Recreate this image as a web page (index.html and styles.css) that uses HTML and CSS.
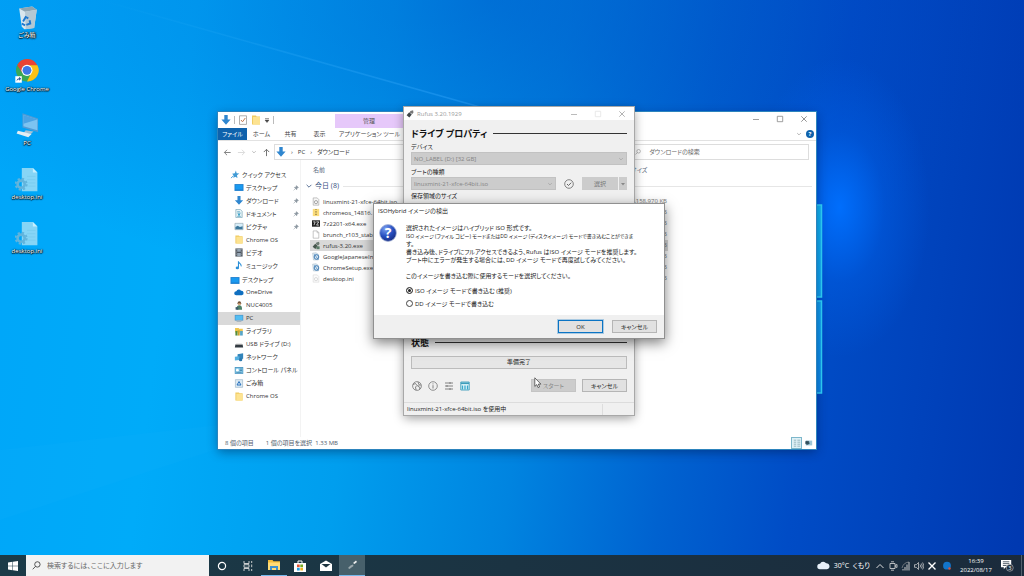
FILE: index.html
```html
<!DOCTYPE html>
<html lang="ja">
<head>
<meta charset="utf-8">
<meta name="viewport" content="width=device-width, initial-scale=1">
<title>デスクトップ</title>
<link rel="stylesheet" href="styles.css">
</head>
<body>
<svg class="defs" aria-hidden="true">
  <symbol id="down" viewBox="0 0 10 10"><path d="M3.3 0h3.4v4.6H9.6L5 9.8.4 4.6h2.9z" fill="#2f86cf"/></symbol>
  <symbol id="screen" viewBox="0 0 10 10"><path d="M0 1.2h10v7.6H0z" fill="#1c7fd0"/><path d="M1 2.2h8v5H1z" fill="#199af0"/></symbol>
  <symbol id="folder" viewBox="0 0 10 10"><path d="M1 .5h4l.6 1H9v8H1z" fill="#f0cb62"/><path d="M2 2h7v7.5H2z" fill="#fde391"/></symbol>
  <symbol id="pin" viewBox="0 0 8 8"><path d="M4.6.8 7.2 3.4 6.3 3.7 5.2 4.9 4.9 6.4 1.8 3.2 3.3 2.9 4.4 1.8zM3 5 .8 7.2" fill="#8b96a0" stroke="#8b96a0" stroke-width=".7"/></symbol>
  <symbol id="page" viewBox="0 0 10 10"><path d="M1.5.5h5L8.5 2.6v7h-7z" fill="#fff" stroke="#9a9a9a" stroke-width=".7"/><path d="M6.3.6v2.2h2.1" fill="none" stroke="#9a9a9a" stroke-width=".6"/></symbol>
  <symbol id="doc" viewBox="0 0 10 10"><path d="M1.5.5h5L8.5 2.6v7h-7z" fill="#e8f5f8" stroke="#6e9db0" stroke-width=".7"/><path d="M3 3h3M3 4.6h4M3 8.2h4" stroke="#3b8fb5" stroke-width=".7"/><circle cx="5" cy="6.3" r="1.2" fill="#3ba2c9"/></symbol>
  <symbol id="disc" viewBox="0 0 10 10"><path d="M1.5.5h5L8.5 2.6v7h-7z" fill="#f7f7f7" stroke="#999" stroke-width=".7"/><circle cx="5" cy="5.8" r="2" fill="none" stroke="#888" stroke-width=".9"/></symbol>
  <symbol id="picture" viewBox="0 0 10 10"><path d="M.5 1.5h9v7h-9z" fill="#d7eefa" stroke="#93a5b0" stroke-width=".7"/><path d="M1 8V5.6l2.6-1.4L6 5.6l3-1V8z" fill="#3c789c"/></symbol>
  <symbol id="film" viewBox="0 0 10 10"><path d="M1 .5h8v9H1z" fill="#4a525c"/><path d="M3 1.2h4v3H3zM3 5.6h4v3.2H3z" fill="#97a7b6"/><path d="M1.9 1v8M8.1 1v8" stroke="#ddd" stroke-width=".7" stroke-dasharray="1"/></symbol>
  <symbol id="note" viewBox="0 0 10 10"><path d="M4.4.4v6.8M4.4.8C5.3 3 8 3 7.4 6" fill="none" stroke="#2b8fd8" stroke-width="1.2"/><ellipse cx="3.2" cy="7.7" rx="1.9" ry="1.6" fill="#2b8fd8"/></symbol>
  <symbol id="cloud" viewBox="0 0 12 10"><path d="M2.7 8.4a2.5 2.5 0 0 1 .1-5A3.2 3.2 0 0 1 8.4 3a2.7 2.7 0 0 1 .8 5.4z"/></symbol>
  <symbol id="user" viewBox="0 0 10 10"><circle cx="5.4" cy="2.4" r="2" fill="#6e4f35"/><path d="M4 2.6h2.8v1.8H4z" fill="#e2b184"/><path d="M2.2 9.6C2 6 3.5 4.6 5.4 4.6S8.6 6 8.4 9.6z" fill="#4c8067"/><path d="M1.2 6.8h3v2.8h-3z" fill="#3c5a6d"/></symbol>
  <symbol id="pc" viewBox="0 0 10 10"><path d="M.3 1h9.4v6.3H.3z" fill="#4d93c5"/><path d="M1 1.7h8v4.9H1z" fill="#53bdf2"/><path d="M3 7.3h4l1 1.6H2z" fill="#a9b8c2"/></symbol>
  <symbol id="library" viewBox="0 0 10 10"><path d="M.6 1h4l.6 1h4v4H.6z" fill="#f0c64e"/><path d="M1 4.5h2.4v5H1z" fill="#528e3d"/><path d="M3.6 3.8h2.2v5.7H3.6z" fill="#caa430"/><path d="M6.2 4.5h3v5h-3z" fill="#56a5c9"/></symbol>
  <symbol id="usb" viewBox="0 0 10 10"><path d="M1 5h8l.6 3.2H.4z" fill="#333b42"/><path d="M1 5l1-.9h6l1 .9z" fill="#aaa"/></symbol>
  <symbol id="network" viewBox="0 0 10 10"><path d="M3.4 1.4 9.6.4v6.1l-6.2.9z" fill="#3284ba"/><path d="M.4 4.2l5-.5v4.1l-5 .6z" fill="#54afe0"/><circle cx="6.8" cy="7.4" r="1.9" fill="#2d79ae"/></symbol>
  <symbol id="control" viewBox="0 0 10 10"><path d="M.3 1.2h9.4v7.5H.3z" fill="#3e8cba"/><path d="M1 2h8v6H1z" fill="#8bcdec"/><circle cx="3.2" cy="4.6" r="1.5" fill="#fff"/><path d="M5.7 3.4h2.7M5.7 5h2.7M2 7h6" stroke="#276a93" stroke-width=".7"/></symbol>
  <symbol id="bin" viewBox="0 0 10 10"><path d="M1 .7h8v8.6H1z" fill="#dceaf3" stroke="#8caabd" stroke-width=".6"/><path d="M5 2.8 7.2 6.7H2.8z" fill="none" stroke="#2770bd" stroke-width="1.1"/></symbol>
  <symbol id="star" viewBox="0 0 10 10"><path d="M6 .6 6.800 3.600 9.800 4 7.200 5.800 7.800 9 5.200 7.400 3.200 8.800 3.600 6 1.800 4.200 4.800 3.600z" fill="#3f9ad5"/><path d="M3.500 6.200 .5 9" stroke="#3f9ad5"/></symbol>
  <symbol id="rufus" viewBox="0 0 10 10"><path d="M5.5 1.3 8.8.2 9.4 3.2 7.8 5 4.7 3z" fill="#777"/><path d="M4 2.9 7.2 5.6 4.2 9.4 .8 6.6z" fill="#3f4548"/></symbol>
  <symbol id="rufusfile" viewBox="0 0 10 10"><path d="M5.500 1.300 8.800.2 9.400 3.200 7.800 5 4.700 3z" fill="#6d7a72"/><path d="M4 2.900 7.200 5.600 4.200 9.400 .8 6.600z" fill="#47564d"/><path d="M5.500 6h4v3.600h-4z" fill="#5b7c68"/></symbol>
  <symbol id="installer" viewBox="0 0 10 10"><path d="M.8.8 5 .3l3 2v7H1.800z" fill="#dbe9f2" stroke="#8da5b7" stroke-width=".5"/><circle cx="5.6" cy="5.6" r="2.9" fill="none" stroke="#3977b3" stroke-width="1.2"/><path d="M3 2.2 7.8 9" stroke="#3977b3" stroke-width=".8"/></symbol>
  <symbol id="ini" viewBox="0 0 36 40"><path d="M10 3h17l7 7v29H10z" fill="#86d5f6"/><path d="M27 3v7h7z" fill="#c6f0ff"/><path d="M18 16h13M18 21h13M20 26h11M20 31h11" stroke="#76cbed"/><circle cx="9" cy="28" r="5.500" fill="none" stroke="#62b4dc" stroke-width="4"/><circle cx="9" cy="28" r="8.500" fill="none" stroke="#62b4dc" stroke-width="3" stroke-dasharray="3.400 3.300"/></symbol>
  <symbol id="min" viewBox="0 0 10 10"><path d="M2 5.500h6" stroke="currentColor" stroke-width=".8"/></symbol>
  <symbol id="max" viewBox="0 0 10 10"><path d="M2.300 2.300h5.400v5.400H2.300z" fill="none" stroke="currentColor" stroke-width=".8"/></symbol>
  <symbol id="close" viewBox="0 0 10 10"><path d="M2.300 2.300l5.400 5.400M7.700 2.300 2.300 7.700" stroke="currentColor" stroke-width=".9"/></symbol>
  <symbol id="chev" viewBox="0 0 10 10"><path d="M2 3.500 5 6.500 8 3.500" fill="none" stroke="currentColor" stroke-width="1"/></symbol>
  <symbol id="lens" viewBox="0 0 10 10"><circle cx="6" cy="3.8" r="3" fill="none" stroke="currentColor" stroke-width=".9"/><path d="M3.9 6 .8 9.2" stroke="currentColor" stroke-width=".9"/></symbol>
</svg>

<div class="desktop">
  <svg class="wallpaper" viewBox="0 0 1024 576" preserveAspectRatio="none" aria-hidden="true">
    <defs>
      <linearGradient id="beam" x1="0" y1="0" x2="1" y2="0"><stop offset="0" stop-color="#4cc4ff" stop-opacity="0"/><stop offset="1" stop-color="#38a8ff" stop-opacity=".4"/></linearGradient>
      <linearGradient id="pane" x1="0" y1="0" x2="0" y2="1"><stop offset="0" stop-color="#12b5f2"/><stop offset="1" stop-color="#0d86e8"/></linearGradient>
    </defs>
    <path d="M100 0 480 107" stroke="url(#beam)" stroke-width="1.500" fill="none"/>
    <path d="M0 450 218 425V449L0 520z" fill="#34baff" opacity=".06"/>
    <path d="M700 205h121.500v92H700zM700 301h121.500v92H700z" fill="url(#pane)" stroke="#2fd2fa" stroke-width="1.500"/>
  </svg>

  <main class="workspace">
    <nav class="shortcuts" aria-label="デスクトップ">
      <a class="shortcut" href="#bin-folder"><svg viewBox="0 0 36 40"><path d="M6 7 26 4l7 5-4 28-15 2-4-4z" fill="#d8e7ee"/><path d="M6 7 26 4l7 5-18 3z" fill="#8da5b2"/><path d="M15 12 33 9l-4 28-13 2z" fill="#b4c8d3"/><path d="M12 27l4-7 4 2M22 25l1 5-6 2M15 33l-5-3" fill="none" stroke="#1e78ce" stroke-width="3"/></svg><span>ごみ箱</span></a>
      <a class="shortcut" href="#chrome"><svg viewBox="0 0 36 40"><circle cx="18" cy="19" r="17" fill="#3aa757"/><path d="M3 11A17 17 0 0 1 34 12L18 12z" fill="#ea4335"/><path d="M34 11A17 17 0 0 1 18 36L26 20 19 11z" fill="#fbc116"/><path d="M3 11 11 23 11 14 18 11z" fill="#ea4335"/><circle cx="18" cy="19" r="8.500" fill="#fff"/><circle cx="18" cy="19" r="6.800" fill="#3d78e8"/><path d="M0 28h10v10H0z" fill="#fff"/><path d="M2 36c0-4 2-5 4-5v-2l3 3-3 3v-2c-2 0-3 1-4 3z" fill="#26549a"/></svg><span>Google Chrome</span></a>
      <a class="shortcut" href="#pc"><svg viewBox="0 0 36 40"><path d="M11 2 35 10V31L11 24z" fill="#4f9bd5"/><path d="M12.500 4.500 34 11.500V28L12.500 22z" fill="#7cc3f1"/><path d="M12.500 4.500 34 11.500 12.500 18z" fill="#4ba3e4"/><path d="M16 28 28 30 24 34 13 32z" fill="#a5c1d4"/><path d="M4 29 25 34 20 39 2 33z" fill="#e3edf3"/></svg><span>PC</span></a>
      <a class="shortcut" href="#ini1"><svg><use href="#ini"/></svg><span>desktop.ini</span></a>
      <a class="shortcut" href="#ini2"><svg><use href="#ini"/></svg><span>desktop.ini</span></a>
    </nav>

    <section class="window explorer" aria-label="ダウンロード">
      <header class="ribbon">
        <div class="quickbar">
          <svg class="ic10"><use href="#down"/></svg><i class="bar"></i>
          <svg class="ic10" viewBox="0 0 10 10"><path d="M1.500.8h7v8.600h-7z" fill="#fff" stroke="#8e8e8e" stroke-width=".7"/><path d="M3 5l1.500 1.800L7.300 3" fill="none" stroke="#c47c55"/></svg>
          <svg class="ic10"><use href="#folder"/></svg>
          <svg class="ic6" viewBox="0 0 6 6"><path d="M1 1.500h4M1 3h4L3 5.500z" fill="#444" stroke="#444" stroke-width=".5"/></svg><i class="bar"></i>
        </div>
        <div class="tool-title">管理</div>
        <div class="caption">
          <button aria-label="最小化"><svg><use href="#min"/></svg></button>
          <button aria-label="最大化"><svg><use href="#max"/></svg></button>
          <button aria-label="閉じる"><svg><use href="#close"/></svg></button>
        </div>
      </header>
      <div class="tabs">
        <button class="tab file">ファイル</button><button class="tab">ホーム</button><button class="tab">共有</button><button class="tab">表示</button><button class="tab tools">アプリケーション ツール</button>
        <span class="tabs-end"><svg class="ic6"><use href="#chev"/></svg><span class="help">?</span></span>
      </div>
      <div class="address">
        <div class="arrows">
          <svg viewBox="0 0 10 10"><path d="M8.500 5H1.500M4.500 2l-3 3 3 3" fill="none" stroke="#777"/></svg>
          <svg viewBox="0 0 10 10"><path d="M1 5h7.500M5.500 2l3 3-3 3" fill="none" stroke="#d8d8d8"/></svg>
          <svg class="small"><use href="#chev"/></svg>
          <svg viewBox="0 0 10 10"><path d="M5 9V1.500M2 4.500 5 1.500l3 3" fill="none" stroke="#666"/></svg>
        </div>
        <div class="path"><svg class="ic10"><use href="#down"/></svg><i>›</i><a href="#pc">PC</a><i>›</i><a href="#downloads">ダウンロード</a></div>
        <label class="find"><svg class="ic6"><use href="#lens"/></svg><input type="text" placeholder="ダウンロードの検索" aria-label="ダウンロードの検索"></label>
      </div>
      <div class="panes">
        <nav class="tree" aria-label="フォルダー">
          <a class="top" href="#q"><svg><use href="#star"/></svg>クイック アクセス</a>
          <a href="#t1"><svg><use href="#screen"/></svg>デスクトップ<svg class="pin"><use href="#pin"/></svg></a>
          <a href="#t2"><svg><use href="#down"/></svg>ダウンロード<svg class="pin"><use href="#pin"/></svg></a>
          <a href="#t3"><svg><use href="#doc"/></svg>ドキュメント<svg class="pin"><use href="#pin"/></svg></a>
          <a href="#t4"><svg><use href="#picture"/></svg>ピクチャ<svg class="pin"><use href="#pin"/></svg></a>
          <a href="#t5"><svg><use href="#folder"/></svg>Chrome OS</a>
          <a href="#t6"><svg><use href="#film"/></svg>ビデオ</a>
          <a href="#t7"><svg><use href="#note"/></svg>ミュージック</a>
          <a class="top second" href="#t8"><svg><use href="#screen"/></svg>デスクトップ</a>
          <a href="#t9"><svg fill="#0f6fc0"><use href="#cloud"/></svg>OneDrive</a>
          <a href="#t10"><svg><use href="#user"/></svg>NUC4005</a>
          <a class="current" href="#t11"><svg><use href="#pc"/></svg>PC</a>
          <a href="#t12"><svg><use href="#library"/></svg>ライブラリ</a>
          <a href="#t13"><svg><use href="#usb"/></svg>USB ドライブ (D:)</a>
          <a href="#t14"><svg><use href="#network"/></svg>ネットワーク</a>
          <a href="#t15"><svg><use href="#control"/></svg>コントロール パネル</a>
          <a href="#t16"><svg><use href="#bin"/></svg>ごみ箱</a>
          <a href="#t17"><svg><use href="#folder"/></svg>Chrome OS</a>
        </nav>
        <div class="files">
          <table>
            <thead>
              <tr><th class="name">名前</th><th class="size">サイズ</th></tr>
            </thead>
            <tbody>
              <tr class="group"><td colspan="2"><div><svg class="ic8"><use href="#chev"/></svg>今日 (8)</div></td></tr>
              <tr><td><span><svg><use href="#disc"/></svg>linuxmint-21-xfce-64bit.iso</span></td><td class="kb">2,158,970 KB</td></tr>
              <tr><td><span><svg viewBox="0 0 10 10"><path d="M1 .5h8v9H1z" fill="#fbdc7b"/><path d="M5 1v8" stroke="#7b6b37" stroke-width="1.500" stroke-dasharray="1"/></svg>chromeos_14816.</span></td><td class="kb">KB</td></tr>
              <tr><td><span><svg viewBox="0 0 10 10"><path d="M0 1h10v8H0z" fill="#222"/><path d="M1.500 3h2.500L2.500 7M5.500 3h3L5.700 7h3" fill="none" stroke="#fff" stroke-width=".9"/></svg>7z2201-x64.exe</span></td><td class="kb">KB</td></tr>
              <tr><td><span><svg><use href="#page"/></svg>brunch_r103_stabl</span></td><td class="kb">KB</td></tr>
              <tr class="selected"><td><span><svg><use href="#rufusfile"/></svg>rufus-3.20.exe</span></td><td class="kb">KB</td></tr>
              <tr><td><span><svg><use href="#installer"/></svg>GoogleJapaneseIn</span></td><td class="kb">KB</td></tr>
              <tr><td><span><svg><use href="#installer"/></svg>ChromeSetup.exe</span></td><td class="kb">KB</td></tr>
              <tr><td><span><svg class="faded"><use href="#disc"/></svg>desktop.ini</span></td><td class="kb">KB</td></tr>
            </tbody>
          </table>
        </div>
      </div>
      <footer class="explorer-status">
        <span>8 個の項目</span><span>1 個の項目を選択&nbsp; 1.33 MB</span>
        <div class="views">
          <button class="on" aria-label="詳細"><svg viewBox="0 0 10 10"><path d="M1 1.500h3M5.500 1.500H9M1 4h3M5.500 4H9M1 6.500h3M5.500 6.500H9M1 9h3M5.500 9H9" stroke="#7198a5" stroke-width=".8"/></svg></button>
          <button aria-label="大アイコン"><svg viewBox="0 0 10 10"><path d="M1 2h8v6H1z" fill="#9cc6d8"/><path d="M1 3h3.500v3H1zM2 7l4-2" fill="#314b58" stroke="#314b58"/></svg></button>
        </div>
      </footer>
    </section>

    <section class="window rufus" aria-label="Rufus">
      <header class="rufus-title"><svg class="ic8"><use href="#rufus"/></svg><span>Rufus 3.20.1929</span>
        <div class="caption">
          <button aria-label="最小化"><svg><use href="#min"/></svg></button>
          <button aria-label="最大化" disabled><svg><use href="#max"/></svg></button>
          <button aria-label="閉じる"><svg><use href="#close"/></svg></button>
        </div>
      </header>
      <div class="rufus-body">
        <h2>ドライブ プロパティ</h2>
        <label for="device">デバイス</label>
        <div class="pick"><select id="device" disabled><option>NO_LABEL (D:) [32 GB]</option></select><svg class="ic6"><use href="#chev"/></svg></div>
        <label for="boot">ブートの種類</label>
        <div class="boot-row">
          <div class="pick"><select id="boot" disabled><option>linuxmint-21-xfce-64bit.iso</option></select><svg class="ic6"><use href="#chev"/></svg></div>
          <svg class="ic10" viewBox="0 0 10 10"><circle cx="5" cy="5" r="4.300" fill="none" stroke="#666" stroke-width=".8"/><path d="M3 5l1.500 1.500L7.200 3.700" fill="none" stroke="#555" stroke-width=".9"/></svg>
          <div class="split"><button disabled>選択</button><button disabled aria-label="その他"><svg viewBox="0 0 6 6"><path d="M1 2h4L3 4.500z" fill="#888"/></svg></button></div>
        </div>
        <label>保存領域のサイズ</label>
        <h2 class="state">状態</h2>
        <div class="ready" role="status">準備完了</div>
        <div class="actions">
          <button class="tool" aria-label="言語"><svg viewBox="0 0 10 10"><circle cx="5" cy="5" r="4.400" fill="none" stroke="#777" stroke-width=".8"/><path d="M1 3.500 3.500 2.500 5 4.500 3.500 6 4 9M6 1l1 2.500L5.500 5 8 6.500 7.500 8.500M9 4H7" fill="none" stroke="#777" stroke-width=".9"/></svg></button>
          <button class="tool" aria-label="情報"><svg viewBox="0 0 10 10"><circle cx="5" cy="5" r="4.300" fill="none" stroke="#777" stroke-width=".8"/><path d="M5 4.200v3.300M5 2.400v1" stroke="#777" stroke-width=".9"/></svg></button>
          <button class="tool" aria-label="設定"><svg viewBox="0 0 10 10"><path d="M1 2h8M1 5h8M1 8h8M6 1v2M3 4v2M6 7v2" stroke="#777" stroke-width=".9"/></svg></button>
          <button class="tool" aria-label="ログ"><svg viewBox="0 0 10 10"><path d="M.8 1h8.400v8H.8z" fill="#dff4fa" stroke="#3c9cba" stroke-width=".9"/><path d="M1 2.300h8" stroke="#3c9cba" stroke-width="1.600"/><path d="M2.500 4.500v4M5 4.500v4M7.500 4.500v4" stroke="#39a8cb" stroke-width="1.300"/></svg></button>
          <button class="btn start" disabled>スタート</button>
          <button class="btn">キャンセル</button>
        </div>
      </div>
      <footer class="rufus-status"><span>linuxmint-21-xfce-64bit.iso を使用中</span><i></i></footer>
    </section>

    <section class="window dialog" role="dialog" aria-label="ISOHybrid イメージの検出">
      <header>ISOHybrid イメージの検出</header>
      <div class="dialog-body">
        <svg class="question" viewBox="0 0 18 18" role="img" aria-label="確認"><defs><radialGradient id="ball" cx=".35" cy=".25" r=".9"><stop offset="0" stop-color="#7a9ff0"/><stop offset=".5" stop-color="#274fc0"/><stop offset="1" stop-color="#12216e"/></radialGradient></defs><circle cx="9" cy="9" r="8.400" fill="url(#ball)" stroke="#a9b8d8" stroke-width=".8"/><text class="mark" x="9" y="14" text-anchor="middle">?</text></svg>
        <div class="message">
          <p>選択されたイメージはハイブリッド ISO 形式です。<br><span class="fine">ISO イメージ (ファイル コピー) モードまたはDD イメージ (ディスクイメージ) モードで書き込むことができま</span><br>す。<br>書き込み後、ドライブにフルアクセスできるよう、Rufus はISO イメージ モードを推奨します。<br>ブート中にエラーが発生する場合には、DD イメージ モードで再度試してみてください。</p>
          <p>このイメージを書き込む際に使用するモードを選択してください。</p>
          <label><input type="radio" name="mode" checked>ISO イメージ モードで書き込む (推奨)</label>
          <label><input type="radio" name="mode">DD イメージ モードで書き込む</label>
        </div>
      </div>
      <footer><button class="btn ok">OK</button><button class="btn">キャンセル</button></footer>
    </section>

    <svg class="cursor" viewBox="0 0 8 12" aria-hidden="true"><path d="M.8.8v8.600l2-1.800 1.300 3 1.500-.7-1.300-2.800h2.600z" fill="#fff" stroke="#333" stroke-width=".7"/></svg>
  </main>

  <footer class="taskbar">
    <button class="start-menu" aria-label="スタート"><svg class="ic10" viewBox="0 0 10 10"><path d="M0 1.400 4.500.8v3.900H0zM5 .7 10 0v4.700H5zM0 5.200h4.500v4L0 8.600zM5 5.200h5V10l-5-.7z" fill="#fff"/></svg></button>
    <label class="search"><svg><use href="#lens"/></svg><input type="text" placeholder="検索するには、ここに入力します" aria-label="検索"></label>
    <div class="apps">
      <button aria-label="Cortana"><svg viewBox="0 0 10 10"><circle cx="5" cy="5" r="3.600" fill="none" stroke="#fff" stroke-width="1.200"/></svg></button>
      <button aria-label="タスク ビュー"><svg viewBox="0 0 10 10"><path d="M1 0v2.500h5V0M1 10V7.500h5V10M1 3.700h5v2.600H1zM8.700 0v2M8.700 3.500v2.700M8.700 8v2" fill="none" stroke="#ddd" stroke-width=".9"/></svg></button>
      <button class="open" aria-label="エクスプローラー"><svg class="big" viewBox="0 0 12 12"><path d="M0 1h4.500l1 1.300H12V11H0z" fill="#f3bd3b"/><path d="M0 3.500h12V11H0z" fill="#ffdc75"/><path d="M2 7h8v4H8V9H4v2H2z" fill="#3e91cd"/></svg></button>
      <button aria-label="Microsoft Store"><svg class="big" viewBox="0 0 12 12"><path d="M4 3V1h4v2" fill="none" stroke="#fff"/><path d="M0 3h12v9H0z" fill="#fff"/><path d="M3 4.500h2.700v2.700H3z" fill="#e65332"/><path d="M6.300 4.500H9v2.700H6.300z" fill="#76ac25"/><path d="M3 7.800h2.700v2.700H3z" fill="#249fe0"/><path d="M6.300 7.800H9v2.700H6.300z" fill="#f2b423"/></svg></button>
      <button aria-label="メール"><svg class="big" viewBox="0 0 12 12"><path d="M0 4 6 .5 12 4v7H0z" fill="#fff"/><path d="M1.500 4h9L6 7.500z" fill="#1d3440"/></svg></button>
      <button class="active" aria-label="Rufus"><svg viewBox="0 0 10 10"><path d="M6 3 9 .5 10 2 7.500 4z" fill="#eee"/><path d="M3.500 5.500 6 4.500l.5 1.500L2.500 9 1 8z" fill="#9ca9ae"/></svg></button>
    </div>
    <div class="tray">
      <button class="weather"><svg viewBox="0 0 12 10" fill="#e7f0fa"><use href="#cloud"/></svg>30°C&ensp;くもり</button>
      <svg viewBox="0 0 10 10"><path d="M1.500 7 5 3.500 8.500 7" fill="none" stroke="#ddd"/></svg>
      <svg viewBox="0 0 10 10"><path d="M2 2.500h5v5H2zM7 4.500l2-1v3l-2-1M3 .8h3M3 9.200h3" fill="none" stroke="#ddd" stroke-width=".8"/></svg>
      <svg viewBox="0 0 10 10"><path d="M2 9.500V8M4 9.500V6M6 9.500V3.500M8 9.500V1" stroke="#ccc" stroke-width="1"/><path d="M1 7a8 8 0 0 1 7-6" fill="none" stroke="#aaa" stroke-width=".6"/></svg>
      <svg viewBox="0 0 10 10"><path d="M.5 3.700h1.800L4.500 1.500v7L2.300 6.300H.5zM6 3.500q1.200 1.500 0 3M7.300 2.500q2 2.500 0 5M8.600 1.500q2.800 3.500 0 7" fill="none" stroke="#ddd" stroke-width=".7"/></svg>
      <svg viewBox="0 0 10 10"><path d="M1.500 1.500l7 7M8.500 1.500l-7 7" stroke="#fff" stroke-width="1.400"/></svg>
      <svg class="agent" viewBox="0 0 10 10"><circle cx="5" cy="4.700" r="3.900" fill="#1274ca"/><circle cx="7.500" cy="7.500" r="1.200" fill="#d8513b"/></svg>
      <time datetime="2022-08-17T16:39">16:39<br>2022/08/17</time>
      <button class="notice" aria-label="通知"><svg viewBox="0 0 14 14"><path d="M0 1h11v8H5L3 11V9H0z" fill="#fff"/><path d="M2 3h7M2 5h7M2 7h4" stroke="#1d2d3d" stroke-width=".8"/><circle cx="9.500" cy="9.500" r="3.700" fill="#1d2d3d" stroke="#bbb" stroke-width=".7"/><text class="count" x="9.500" y="12" text-anchor="middle">3</text></svg></button>
    </div>
  </footer>
</div>
</body>
</html>
```
FILE: styles.css
```css
* { box-sizing: border-box; }

body {
  margin: 0;
  font: 6px/8px "Open Sans", "Noto Sans CJK JP", sans-serif;
  font-feature-settings: "palt";
  color: #333;
}

button, input, select { font: inherit; font-feature-settings: inherit; color: inherit; }
button { border: 0; padding: 0; background: none; }
a { color: inherit; text-decoration: none; }
i { font-style: normal; }
svg { flex: none; display: block; }
p, h2 { margin: 0; }
.defs { position: absolute; width: 0; height: 0; }
.ic6 { width: 6px; height: 6px; }
.ic8 { width: 8px; height: 8px; }
.ic10 { width: 10px; height: 10px; }

.desktop {
  position: relative;
  display: flex;
  flex-direction: column;
  height: 100vh;
  min-height: 460px;
  overflow: hidden;
  background:
    radial-gradient(ellipse 90px 150px at 82% 36%, rgba(0, 112, 255, .95), rgba(0, 98, 235, .4) 50%, transparent),
    radial-gradient(ellipse 600px 300px at 48% 0, rgba(0, 64, 190, .4), transparent),
    linear-gradient(97deg, #00a6f9 0, #00abf9 18%, #009eee 36%, #0084e0 52%, #0062d0 66%, #004cc6 78%, #0038b0 100%);
}
.wallpaper { position: absolute; inset: 0; width: 100%; height: 100%; }
.workspace { position: relative; flex: 1; }

.shortcuts { display: flex; flex-direction: column; width: 54px; padding-top: 4px; }
.shortcut {
  display: flex;
  flex-direction: column;
  align-items: center;
  height: 54px;
  color: #fff;
  text-shadow: 0 1px 1px #000, 1px 0 1px #000, 0 0 2px #000;
  white-space: nowrap;
}
.shortcut svg { width: 24px; height: 26px; margin-bottom: 1px; }

.window {
  position: absolute;
  display: flex;
  flex-direction: column;
  background: #fff;
  white-space: nowrap;
}
.caption { display: flex; margin-left: auto; color: #888; }
.caption button { display: grid; place-items: center; width: 24px; height: 14px; }
.caption button:disabled { color: #e4e4e4; }
.caption svg { width: 10px; height: 10px; }

/* File explorer */
.explorer {
  left: 218px;
  top: 112px;
  right: 208px;
  bottom: 106px;
  box-shadow: 0 0 0 1px #2d84bd, 0 3px 10px rgba(0, 20, 60, .45);
}
.ribbon { display: grid; grid-template-columns: 117px 72px 1fr; height: 16px; }
.quickbar { display: flex; align-items: center; gap: 3px; padding-left: 3px; }
.bar { width: 1px; height: 8px; background: #bbb; }
.tool-title { display: grid; place-items: center; margin-top: 2px; padding-right: 4px; background: #e6c8fa; color: #555; }
.tabs { display: flex; height: 13px; border-bottom: 1px solid #e2e2e2; color: #444; }
.tab { width: 29px; }
.tab.file { background: #0f62ac; color: #fff; }
.tab.tools { width: 71px; }
.tabs-end { display: flex; align-items: center; gap: 4px; margin-left: auto; padding-right: 2px; color: #888; }
.help { width: 8px; height: 8px; border-radius: 50%; background: #0f62ac; color: #fff; font-weight: 700; text-align: center; }
.address { display: flex; gap: 8px; height: 19px; padding: 3px 7px 0 5px; }
.arrows { display: flex; align-items: center; gap: 5px; width: 43px; color: #999; }
.arrows svg { width: 9px; height: 9px; }
.arrows .small { width: 6px; height: 6px; }
.path, .find { display: flex; align-items: center; border: 1px solid #ddd; }
.path { flex: 2; gap: 5px; padding-left: 1px; }
.find { flex: 1; gap: 8px; padding-left: 4px; color: #888; }
.find input { flex: 1; min-width: 0; border: 0; padding: 0; outline: 0; background: none; }
input::placeholder { color: #666; opacity: 1; }

.panes { flex: 1; display: flex; min-height: 0; }
.tree {
  display: grid;
  grid-auto-rows: 1fr;
  width: 83px;
  padding: 8px 0 34px;
  border-right: 1px solid #f3f3f3;
}
.tree a { display: flex; align-items: center; gap: 2px; padding-left: 16px; }
.tree svg { width: 10px; height: 9px; }
.tree .top { padding-left: 12px; }
.tree .second { margin-top: 3px; }
.tree .current { background: #d9d9d9; }
.tree .pin { width: 6px; height: 6px; margin-left: auto; margin-right: 1px; }

.files { flex: 1; padding: 4px 4px 0 9px; }
table { width: 100%; border-collapse: collapse; table-layout: fixed; }
th, td { padding: 0; font-weight: 400; text-align: left; }
th { height: 12px; color: #5b6b80; }
.name { width: 304px; padding-left: 3px; }
.size { padding-left: 17px; }
.group td { height: 20px; }
.group div { display: flex; align-items: center; gap: 2px; margin-left: -5px; font-size: 7px; color: #33507e; }
.group div::after { content: ""; flex: 1; margin-left: 2px; border-top: 1px solid #e6e6e6; }
tbody tr { height: 11px; }
tbody span { display: flex; align-items: center; gap: 3px; padding-left: 2px; }
tbody span svg { width: 8px; height: 9px; }
.faded { opacity: .4; }
.kb { display: block; width: 54px; height: 11px; padding-right: 1px; line-height: 11px; text-align: right; color: #777; }
.selected td { background: #d9d9d9; }

.explorer-status { display: flex; align-items: center; gap: 12px; height: 12px; padding: 0 2px 0 7px; color: #53606e; }
.views { display: flex; align-items: center; gap: 1px; margin-left: auto; }
.views button { display: grid; place-items: center; width: 11px; height: 12px; }
.views .on { border: 1px solid #7db7cb; background: #dff1f6; }
.views svg { width: 8px; height: 8px; }

/* Rufus */
.rufus {
  left: 404px;
  top: 107px;
  width: 230px;
  min-height: 308px;
  background: #f0f0f0;
  box-shadow: 0 0 0 1px #a8a8a8, 0 3px 10px rgba(0, 0, 0, .4);
}
.rufus-title { display: flex; align-items: center; gap: 3px; height: 13px; padding-left: 2px; background: #fff; color: #999; }
.rufus .caption { color: #aaa; }
.rufus-body { flex: 1; display: flex; flex-direction: column; padding: 6px 7px 0; color: #222; }
h2 { display: flex; align-items: center; gap: 6px; height: 15px; font-size: 9px; line-height: 14px; color: #111; }
h2::after { content: ""; flex: 1; height: 1px; background: #333; }
.rufus-body > label { height: 11px; padding-top: 2px; }
.pick { position: relative; display: flex; flex: 1; align-items: center; }
.pick select {
  width: 100%;
  height: 13px;
  padding: 0 2px;
  border: 1px solid #c2c2c2;
  border-radius: 0;
  appearance: none;
  background: #ccc;
  color: #858585;
  opacity: 1;
}
.pick svg { position: absolute; right: 3px; color: #999; }
.rufus-body > .pick { flex: none; margin-bottom: 1px; }
.boot-row { display: flex; align-items: center; gap: 8px; }
.split { display: flex; width: 45px; gap: 1px; color: #777; }
.split button { flex: 1; height: 13px; background: #ccc; }
.split button + button { flex: 0 0 8px; }
.split svg { width: 6px; height: 6px; margin: auto; }
.state { margin-top: auto; }
.ready { height: 13px; margin: 6px 0 10px; border: 1px solid #bcbcbc; background: #e6e6e6; line-height: 11px; text-align: center; }
.actions { display: flex; gap: 6px; margin-bottom: 10px; padding-left: 1px; }
.tool { width: 10px; height: 13px; }
.tool svg { width: 10px; height: 10px; }
.btn { width: 45px; height: 13px; border: 1px solid #b5b5b5; background: #e1e1e1; line-height: 8px; color: #222; }
.start { margin-left: auto; border-color: #c4c4c4; background: #ccc; color: #888; }
.rufus-status { display: flex; align-items: center; height: 13px; padding: 0 3px; border-top: 1px solid #dcdcdc; color: #222; }
.rufus-status i { width: 1px; height: 11px; margin-left: auto; margin-right: 28px; background: #ddd; }

/* Mode prompt */
.dialog {
  left: 374px;
  top: 204px;
  width: 290px;
  box-shadow: 0 0 0 1px #909090, 0 4px 12px 1px rgba(0, 0, 0, .5);
  color: #222;
}
.dialog header { height: 14px; padding: 3px 4px; }
.dialog-body { display: flex; gap: 9px; padding: 6px 5px 5px; }
.question { width: 18px; height: 18px; }
.mark { font: 700 14px "Open Sans", sans-serif; fill: #fff; }
.message { display: flex; flex-direction: column; }
.message p { margin-bottom: 8px; }
.message p + p { margin-bottom: 4px; }
.fine { font-size: 5px; }
.message label { display: flex; align-items: center; gap: 2px; height: 13px; }
input[type="radio"] { appearance: none; width: 7px; height: 7px; margin: 0; border: 1px solid #444; border-radius: 50%; background: #fff; }
input[type="radio"]:checked { background: #222; box-shadow: inset 0 0 0 1px #fff; }
.dialog footer { display: flex; justify-content: flex-end; align-items: center; gap: 9px; height: 23px; padding-right: 7px; background: #f0f0f0; }
.dialog .ok { border: 1px solid #0b74c4; box-shadow: 0 0 0 1px rgba(11, 116, 196, .3); }

.cursor { position: absolute; left: 534px; top: 377px; width: 8px; height: 12px; }

/* Taskbar */
.taskbar { position: relative; display: flex; height: 21px; background: linear-gradient(90deg, #1b3b48, #1b2b3c); color: #fff; }
.start-menu { display: grid; place-items: center; width: 26px; }
.search { display: flex; align-items: center; gap: 6px; width: 183px; padding-left: 6px; background: #f2f2f2; color: #333; font-size: 7px; }
.search svg { width: 9px; height: 9px; }
.search input { flex: 1; min-width: 0; border: 0; padding: 0; outline: 0; background: none; }
.apps { display: flex; }
.apps button { display: grid; place-items: center; width: 26px; }
.apps svg { width: 10px; height: 10px; }
.apps .big { width: 12px; height: 12px; }
.apps .open { border-bottom: 1px solid #76b9ed; }
.apps .active { border-bottom: 1px solid #76b9ed; background: #47606b; }
.tray { display: flex; align-items: center; gap: 3px; margin-left: auto; margin-right: 2px; padding-right: 7px; border-right: 1px solid #52606d; white-space: nowrap; }
.tray svg { width: 10px; height: 10px; }
.weather { display: flex; align-items: center; gap: 4px; margin-right: 2px; font-size: 7px; }
.tray .weather svg { width: 13px; height: 11px; }
.tray .agent { margin-left: 2px; }
.tray time { width: 38px; margin-left: 2px; text-align: center; line-height: 9px; }
.notice { margin-left: 3px; }
.tray .notice svg { width: 13px; height: 13px; }
.count { font: 6px "Open Sans", sans-serif; fill: #fff; }
```
